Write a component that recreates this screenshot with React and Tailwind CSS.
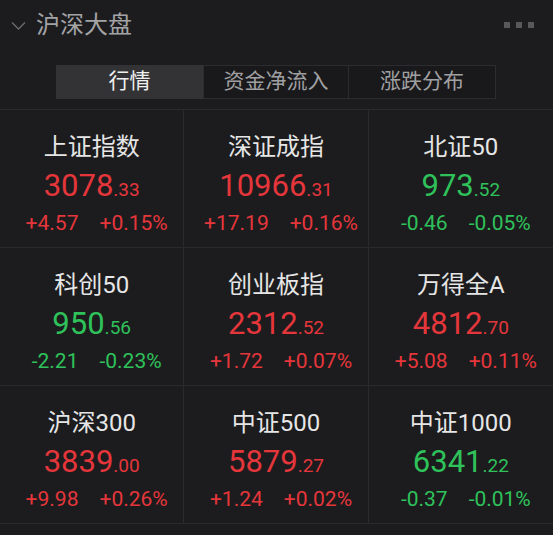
import React from "react";

const data = [
  { name: "上证指数", int: "3078", dec: "33", ch: "+4.57", pct: "+0.15%", up: true },
  { name: "深证成指", int: "10966", dec: "31", ch: "+17.19", pct: "+0.16%", up: true },
  { name: "北证50", int: "973", dec: "52", ch: "-0.46", pct: "-0.05%", up: false },
  { name: "科创50", int: "950", dec: "56", ch: "-2.21", pct: "-0.23%", up: false },
  { name: "创业板指", int: "2312", dec: "52", ch: "+1.72", pct: "+0.07%", up: true },
  { name: "万得全A", int: "4812", dec: "70", ch: "+5.08", pct: "+0.11%", up: true },
  { name: "沪深300", int: "3839", dec: "00", ch: "+9.98", pct: "+0.26%", up: true },
  { name: "中证500", int: "5879", dec: "27", ch: "+1.24", pct: "+0.02%", up: true },
  { name: "中证1000", int: "6341", dec: "22", ch: "-0.37", pct: "-0.01%", up: false },
];

function Cell({ d, i }) {
  const color = d.up ? "text-[#e5363b]" : "text-[#2fc25b]";
  const col = i % 3;
  return (
    <div
      className={`flex h-[138px] flex-col items-center border-b border-[#2a2a2c] pt-[22px] ${
        col < 2 ? "border-r" : ""
      }`}
    >
      <div className="text-[24px] leading-[30px] text-[#e6e6e6]">{d.name}</div>
      <div className={`mt-[6px] flex items-baseline leading-[36px] ${color}`}>
        <span className="text-[31px]">{d.int}</span>
        <span className="text-[19px]">.{d.dec}</span>
      </div>
      <div className={`mt-[2px] flex gap-[21px] pl-[10px] text-[21px] leading-[26px] ${color}`}>
        <span>{d.ch}</span>
        <span>{d.pct}</span>
      </div>
    </div>
  );
}

export default function App() {
  return (
    <div
      className="h-[535px] w-[553px] overflow-hidden bg-[#1c1c1e]"
      style={{ fontFamily: "Roboto, 'Noto Sans CJK SC', sans-serif" }}
    >
      <div className="flex h-[50px] items-center pl-[11px] pr-[19px]">
        <svg width="15" height="10" viewBox="0 0 15 10" className="mt-[2px]">
          <path d="M1 1.5 L7.5 8 L14 1.5" fill="none" stroke="#6a6a6c" strokeWidth="1.4" />
        </svg>
        <div className="ml-[10px] text-[24px] leading-[30px] text-[#a3a3a5]">沪深大盘</div>
        <div className="ml-auto flex gap-[6px]">
          <span className="h-[6px] w-[6px] bg-[#58585a]" />
          <span className="h-[6px] w-[6px] bg-[#58585a]" />
          <span className="h-[6px] w-[6px] bg-[#58585a]" />
        </div>
      </div>
      <div className="mt-[15px] flex h-[34px] pl-[56px]">
        <div className="flex w-[147px] items-center justify-center bg-[#333336] text-[21px] text-[#f0f0f0]">
          行情
        </div>
        <div className="flex w-[146px] items-center justify-center border border-[#2c2c2e] bg-[#19191b] text-[21px] text-[#a0a0a2]">
          资金净流入
        </div>
        <div className="flex w-[147px] items-center justify-center border border-l-0 border-[#2c2c2e] bg-[#19191b] text-[21px] text-[#a0a0a2]">
          涨跌分布
        </div>
      </div>
      <div className="mt-[10px] grid grid-cols-3 border-t border-[#2a2a2c]">
        {data.map((d, i) => (
          <Cell key={i} d={d} i={i} />
        ))}
      </div>
    </div>
  );
}
